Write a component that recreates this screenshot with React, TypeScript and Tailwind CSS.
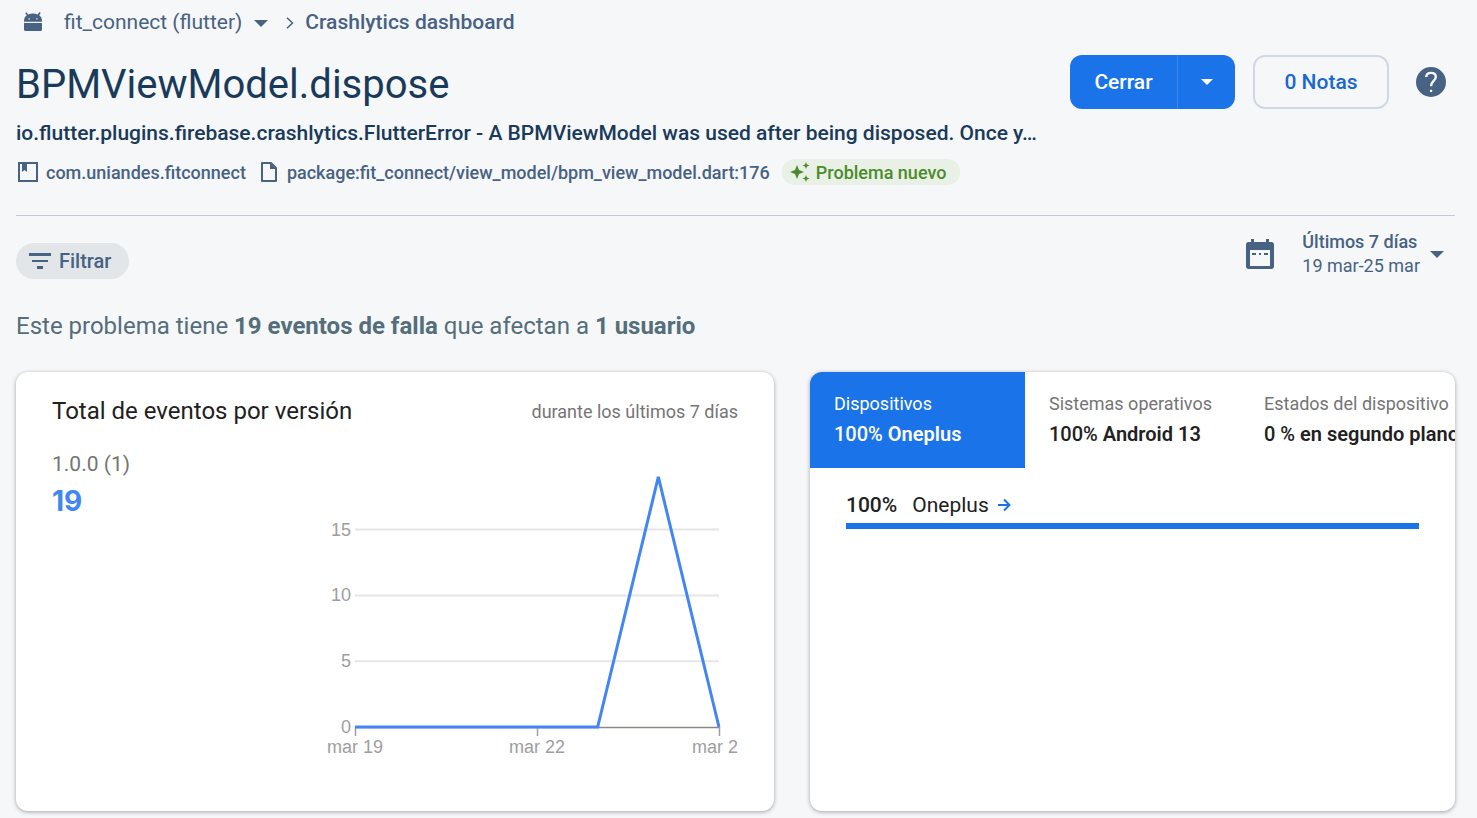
import { useState } from "react";

const tabs = [
  { id: "devices", label: "Dispositivos", percent: "100%", value: "Oneplus" },
  {
    id: "systems",
    label: "Sistemas operativos",
    percent: "100%",
    value: "Android 13",
  },
  {
    id: "states",
    label: "Estados del dispositivo",
    percent: "0 %",
    value: "en segundo plano",
  },
];

const events = [0, 0, 0, 0, 0, 19, 0];
const gridValues = [15, 10, 5];
const xLabels = [
  { index: 0, text: "mar 19" },
  { index: 3, text: "mar 22" },
];

const CHART_LEFT = 37;
const CHART_WIDTH = 364;
const CHART_BASE = 267;
const UNIT = 13.16;

const chartX = (index: number) =>
  CHART_LEFT + (index * CHART_WIDTH) / (events.length - 1);
const chartY = (value: number) => CHART_BASE - value * UNIT;

function Caret({ className }: { className?: string }) {
  return (
    <svg viewBox="0 0 14 7" className={className} fill="currentColor" aria-hidden="true">
      <path d="M0 0h14L7 7z" />
    </svg>
  );
}

function AndroidIcon() {
  return (
    <svg viewBox="0 0 18 19" className="mb-1 h-[19px] w-[18px] shrink-0" fill="currentColor" aria-hidden="true">
      <path d="M0 11h18v6.500c0 .8-.7 1.500-1.500 1.500h-15C.7 19 0 18.300 0 17.500z" />
      <path
        fillRule="evenodd"
        d="M0 9.700c0-3 .7-5.200 2.800-6.500L1.200 1.200l1.100-1 2 2.200C5.600 1.800 7.300 1.600 9 1.600s3.200.2 4.500.8L15.600 0l1.100 1-1.500 2.200c2.100 1.300 2.800 3.500 2.800 6.500zM4.500 6.300h1.200v1.200H4.500zM12.300 6.300h1.200v1.200h-1.200z"
      />
    </svg>
  );
}

function EventsChart() {
  const points = events.map((value, i) => `${chartX(i)},${chartY(value)}`).join(" ");

  return (
    <svg
      viewBox="0 0 420 300"
      className="h-[300px] w-[420px] font-['Liberation_Sans',sans-serif] text-[18px]"
      fill="#9e9e9e"
      role="img"
      aria-label="Eventos por día"
    >
      {gridValues.map((value) => (
        <g key={value}>
          <line
            x1={CHART_LEFT}
            x2={CHART_LEFT + CHART_WIDTH}
            y1={chartY(value)}
            y2={chartY(value)}
            stroke="#e6e6e6"
            strokeWidth="2"
          />
          <text x="33" y={chartY(value) + 6} textAnchor="end">
            {value}
          </text>
        </g>
      ))}
      <text x="33" y={CHART_BASE + 6} textAnchor="end">
        0
      </text>
      <path
        d={`M${CHART_LEFT} ${CHART_BASE + 0.5}H${CHART_LEFT + CHART_WIDTH}`}
        stroke="#8a8a80"
        strokeWidth="1.500"
      />
      {[0, 3, 6].map((i) => (
        <path key={i} d={`M${chartX(i) + 0.5} ${CHART_BASE}v9`} stroke="#9e9e9e" strokeWidth="1.500" />
      ))}
      <polyline points={points} fill="none" stroke="#4285f4" strokeWidth="3" />
      {xLabels.map(({ index, text }) => (
        <text key={text} x={chartX(index)} y="293" textAnchor="middle">
          {text}
        </text>
      ))}
      <text x="374" y="293">
        mar 2
      </text>
    </svg>
  );
}

export default function App() {
  const [activeTab, setActiveTab] = useState("devices");

  return (
    <div className="min-h-screen bg-[#f6f7f9] pr-[22px] pb-1.5 pl-4 font-['Roboto',sans-serif] text-[#476282]">
      <nav className="flex h-11 items-center pt-0.5 pl-2">
        <AndroidIcon />
        <button className="ml-[22px] flex items-center gap-3 text-[21px]" aria-haspopup="listbox">
          fit_connect (flutter)
          <Caret className="h-[7px] w-[14px]" />
        </button>
        <svg viewBox="0 0 8 12" className="mr-[11px] ml-[18px] h-3 w-2" fill="none" stroke="currentColor" strokeWidth="1.500" aria-hidden="true">
          <path d="M1 .7 6.500 6 1 11.300" />
        </svg>
        <a href="#" className="text-[21px] font-medium">
          Crashlytics dashboard
        </a>
      </nav>

      <header className="flex items-start gap-6 border-b border-[#c0cdd9] pb-[29px]">
        <div className="min-w-0 flex-1 pt-2.5">
          <h1 className="text-[40px] leading-[62px] text-[#1a3a5a]">BPMViewModel.dispose</h1>
          <p className="truncate text-[21px] leading-[34px] font-medium text-[#1a3a5a]">
            io.flutter.plugins.firebase.crashlytics.FlutterError - A BPMViewModel was used after being
            disposed. Once y…
          </p>
          <div className="mt-2 flex h-7 items-center text-[18px] font-medium">
            <svg viewBox="0 0 24 24" className="h-6 w-6 shrink-0" aria-hidden="true">
              <path d="M3 3h18v18H3z" fill="none" stroke="currentColor" strokeWidth="2" />
              <path d="M6 3h5v9l-2.500-2L6 12z" fill="currentColor" />
            </svg>
            <span className="ml-1.5">com.uniandes.fitconnect</span>
            <svg viewBox="0 0 16 20" className="ml-[15px] h-5 w-4 shrink-0" aria-hidden="true">
              <path d="M1 1h9l5 5v13H1z" fill="none" stroke="currentColor" strokeWidth="2" strokeLinejoin="round" />
              <path d="M9 1v6h6z" fill="currentColor" />
            </svg>
            <span className="ml-2.5">package:fit_connect/view_model/bpm_view_model.dart:176</span>
            <span className="ml-3 flex h-[26px] items-center gap-1.5 rounded-full bg-[#e9f0e5] pr-3.5 pl-2 text-[#4c8b2b]">
              <svg viewBox="0 0 20 20" className="h-5 w-5" fill="currentColor" aria-hidden="true">
                <path d="M7 3l2 5 5 2-5 2-2 5-2-5-5-2 5-2z" />
                <path d="M16 0l1 2.500 2.500 1-2.500 1L16 7l-1-2.500-2.500-1 2.500-1zM16 13l1 2.500 2.500 1-2.500 1-1 2.500-1-2.500-2.500-1 2.500-1z" />
              </svg>
              Problema nuevo
            </span>
          </div>
        </div>

        <div className="flex items-center pt-[11px] text-[21px] font-medium">
          <div className="flex h-[54px] overflow-hidden rounded-xl bg-[#1a73e8] text-white">
            <button className="w-[107px] pt-0.5">Cerrar</button>
            <button
              className="flex w-[58px] items-center justify-center border-l border-[#3b87ec]"
              aria-label="Más opciones"
              aria-haspopup="menu"
            >
              <Caret className="h-1.5 w-3" />
            </button>
          </div>
          <button className="ml-[18px] h-[54px] w-[136px] rounded-xl border-2 border-[#d0d9e3] pt-0.5 text-[#1967d2]">
            0 Notas
          </button>
          <button className="mr-1.5 ml-6 p-[3px]" aria-label="Ayuda">
            <svg viewBox="2 2 20 20" className="h-[30px] w-[30px]" fill="currentColor" aria-hidden="true">
              <path d="M12 2a10 10 0 1 0 0 20 10 10 0 0 0 0-20z" />
              <path
                d="M8.800 8.700C8.900 6.900 10.200 5.900 12 5.900c1.900 0 3.200 1.100 3.200 2.800 0 2.500-3.200 2.800-3.200 6.100"
                fill="none"
                stroke="#f6f7f9"
                strokeWidth="1.600"
              />
              <path d="M11.300 17.200h1.500v1.500h-1.500z" fill="#f6f7f9" />
            </svg>
          </button>
        </div>
      </header>

      <main>
        <div className="flex items-center justify-between pt-[13px]">
          <button className="mt-3.5 flex h-9 items-center gap-2 rounded-full bg-[#e2e6e9] pr-[18px] pl-[13px] text-[20px] font-medium">
            <svg viewBox="0 0 22 16" className="h-4 w-[22px]" fill="currentColor" aria-hidden="true">
              <path d="M0 0h22v3H0zM3 7h16v2H3zM8 13h6v3H8z" />
            </svg>
            Filtrar
          </button>

          <button className="mr-[11px] flex items-center text-left" aria-haspopup="dialog">
            <svg viewBox="0 0 28 30" className="mr-7 h-[30px] w-7" aria-hidden="true">
              <path
                fillRule="evenodd"
                fill="currentColor"
                d="M5 0h3v3h12V0h3v3h2.500C27 3 28 4 28 5.500v22c0 1.500-1 2.500-2.500 2.500h-23C1 30 0 29 0 27.500v-22C0 4 1 3 2.500 3H5zM4 11v16h20V11zM6 14h4v2H6zm7 0h2v2h-2zm5 0h4v2h-4z"
              />
            </svg>
            <span className="text-[18px] leading-6">
              <span className="block font-medium">Últimos 7 días</span>
              <span className="block">19 mar-25 mar</span>
            </span>
            <Caret className="ml-2.5 h-[7px] w-[14px]" />
          </button>
        </div>

        <h2 className="mt-[29px] text-[24px] leading-9 text-[#546e7a]">
          Este problema tiene <b className="font-bold">19 eventos de falla</b> que afectan a{" "}
          <b className="font-bold">1 usuario</b>
        </h2>

        <div className="mt-7 grid grid-cols-[758fr_645fr] gap-9">
          <section className="rounded-xl bg-white px-9 pt-[21px] pb-[51px] shadow-[0_1px_4px_rgba(0,0,0,0.35)]">
            <div className="flex items-center justify-between">
              <h3 className="text-[24px] leading-9 text-[#212121]">Total de eventos por versión</h3>
              <span className="text-[18px] text-[#757575]">durante los últimos 7 días</span>
            </div>
            <div className="mt-[11px] flex justify-between">
              <div className="pt-2">
                <p className="text-[21px] leading-8 text-[#757575]">1.0.0 (1)</p>
                <p className="font-['Inter',sans-serif] text-[28px] leading-[42px] font-bold text-[#4285f4]">
                  19
                </p>
              </div>
              <div className="pt-5">
                <EventsChart />
              </div>
            </div>
          </section>

          <section className="min-w-0 overflow-hidden rounded-xl bg-white shadow-[0_1px_4px_rgba(0,0,0,0.35)]">
            <div role="tablist" className="flex">
              {tabs.map((tab) => (
                <button
                  key={tab.id}
                  role="tab"
                  aria-selected={activeTab === tab.id}
                  onClick={() => setActiveTab(tab.id)}
                  className={`h-24 w-[215px] shrink-0 px-6 text-left whitespace-nowrap ${
                    activeTab === tab.id ? "bg-[#1a73e8] text-white" : "text-[#212121]"
                  }`}
                >
                  <span
                    className={`block text-[18px] leading-7 ${
                      activeTab === tab.id ? "text-white" : "text-[#757575]"
                    }`}
                  >
                    {tab.label}
                  </span>
                  <span className="block text-[20px] leading-8 font-medium">
                    {tab.percent} <span className="font-semibold">{tab.value}</span>
                  </span>
                </button>
              ))}
            </div>
            <div className="px-9 pt-[19px]">
              <div className="flex items-center text-[21px] leading-9 text-[#212121]">
                <span className="font-medium">100%</span>
                <a href="#" className="ml-[15px] flex items-center gap-2">
                  Oneplus
                  <svg viewBox="0 0 14 14" className="h-3.5 w-3.5 text-[#1a73e8]" fill="none" stroke="currentColor" strokeWidth="2" aria-hidden="true">
                    <path d="M1 7h11M7 1.500l5.500 5.500L7 12.500" />
                  </svg>
                </a>
              </div>
              <div className="h-1.5 bg-[#1a73e8]" />
            </div>
          </section>
        </div>
      </main>
    </div>
  );
}
